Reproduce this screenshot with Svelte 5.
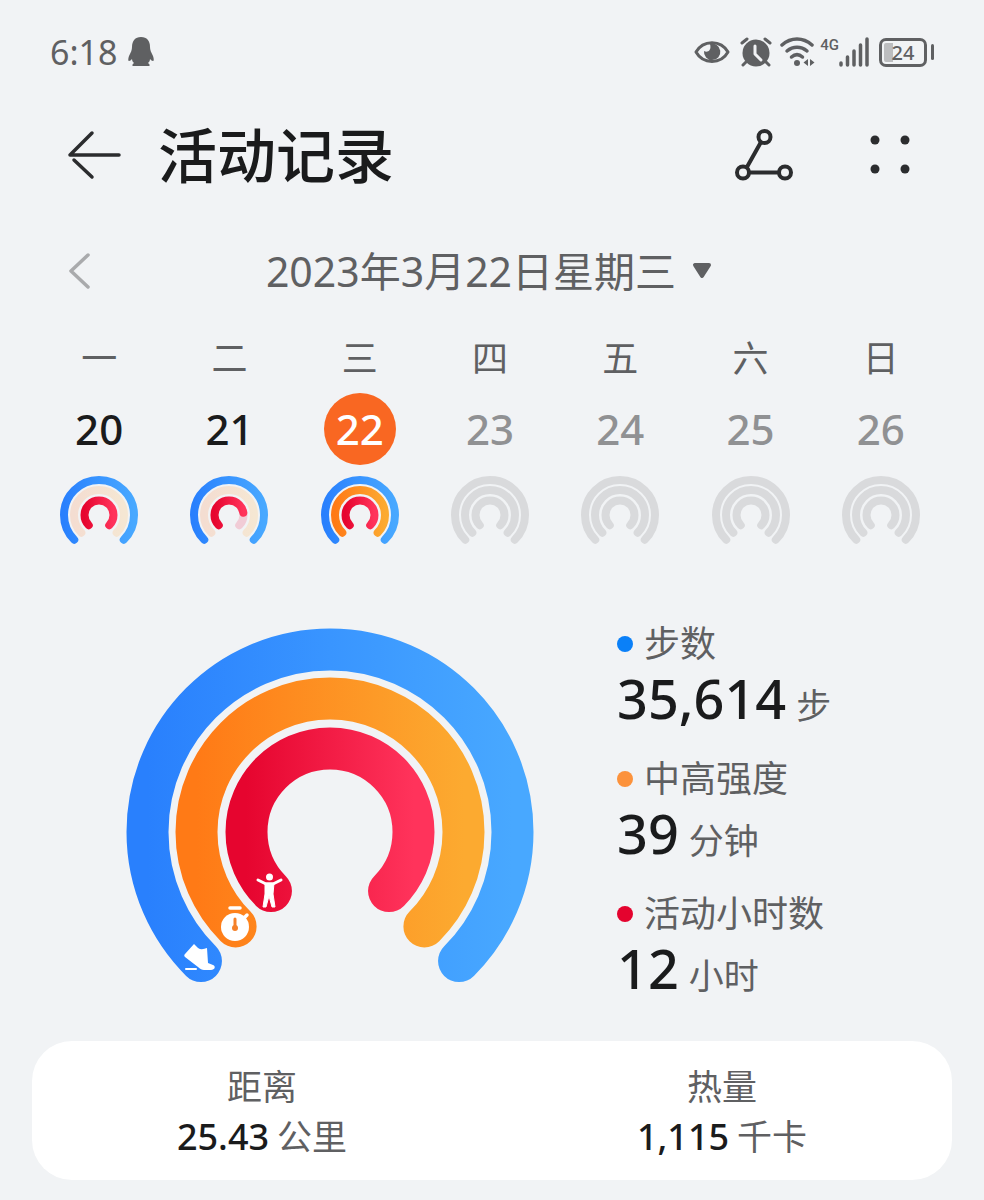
<script>
    const days = [
        { week: '一', date: 20, rings: [100, 0, 100] },
        { week: '二', date: 21, rings: [100, 0, 80] },
        { week: '三', date: 22, rings: [100, 100, 100] },
        { week: '四', date: 23, future: true },
        { week: '五', date: 24, future: true },
        { week: '六', date: 25, future: true },
        { week: '日', date: 26, future: true }
    ];

    const stats = [
        { type: 'steps', label: '步数', value: '35,614', unit: '步' },
        { type: 'effort', label: '中高强度', value: '39', unit: '分钟' },
        { type: 'hours', label: '活动小时数', value: '12', unit: '小时' }
    ];

    const totals = [
        { label: '距离', value: '25.43', unit: '公里' },
        { label: '热量', value: '1,115', unit: '千卡' }
    ];

    const types = ['steps', 'effort', 'hours'];
    const miniRadius = [35, 25, 14.5];
    const bigRadius = [182.5, 133.5, 83.5];

    let selected = $state(22);

    // 270 degree arc, open at the bottom
    function arc(cx, cy, r) {
        const k = r * Math.SQRT1_2;
        return `M${cx - k} ${cy + k}A${r} ${r} 0 1 1 ${cx + k} ${cy + k}`;
    }
</script>

<div class="status">
    <span class="time">6:18</span>
    <svg class="qq" width="26" height="30" viewBox="0 0 26 30">
        <path d="M13 0C7 0 4 4 4 10c0 3-1 5-3 9-1 3-1 5 0 5s2-1 3-2c0 2 1 3 2 4-2 1-2 3-1 3h16c1 0 1-2-1-3 1-1 2-2 2-4 1 1 2 2 3 2s1-2 0-5c-2-4-3-6-3-9 0-6-3-10-9-10z" fill="#5f6062" />
    </svg>

    <div class="status-right">
        <svg width="36" height="26" viewBox="0 0 36 26">
            <path d="M2 13C9 .5 27 .5 34 13 27 25.500 9 25.500 2 13z" fill="none" stroke="#5f6062" stroke-width="3" stroke-linejoin="round" />
            <path d="M16 5a8.200 8.200 0 1 1-6 7c3 2 8 0 6-7z" fill="#5f6062" />
        </svg>
        <svg class="alarm" width="32" height="30" viewBox="0 0 32 30">
            <circle cx="16" cy="16" r="13.500" fill="#5f6062" />
            <path d="M2 6l5-4M30 6l-5-4M6 25l-3 3M26 25l3 3" stroke="#5f6062" stroke-width="3" stroke-linecap="round" />
            <path d="M15 9v8l6 6" fill="none" stroke="#f1f2f4" stroke-width="3" stroke-linecap="round" stroke-linejoin="round" />
        </svg>
        <svg class="wifi" width="36" height="30" viewBox="0 0 36 30">
            <g fill="none" stroke="#5f6062" stroke-width="3.500" stroke-linecap="round">
                <path d="M2 8C11 0 23 0 32 8" />
                <path d="M7 14c6-5 14-5 20 0" />
                <path d="M11.500 20c3.500-3 7.500-3 11 0" />
            </g>
            <circle cx="17" cy="26" r="3" fill="#5f6062" />
            <path d="M28 22v7l-4.500-3.500zM30 22v7l4.500-3.500z" fill="#5f6062" />
        </svg>
        <span class="net">4G</span>
        <svg width="30" height="30" viewBox="0 0 30 30">
            <path d="M2 26v2M8.500 20v8M15 14v14M21.500 8v20M28 2v26" stroke="#5f6062" stroke-width="3.500" stroke-linecap="round" />
        </svg>
        <span class="battery">24</span>
        <span class="battery-tip"></span>
    </div>
</div>

<header class="header">
    <button class="icon-btn" aria-label="返回">
        <svg width="54" height="50" viewBox="0 0 54 50">
            <path d="M51 25H2L24 3M6 30l18 17" fill="none" stroke="#2b2c2e" stroke-width="3.500" stroke-linecap="round" stroke-linejoin="round" />
        </svg>
    </button>
    <h1>活动记录</h1>
    <button class="icon-btn share" aria-label="运动轨迹">
        <svg width="58" height="52" viewBox="0 0 58 52">
            <g fill="none" stroke="#2b2c2e" stroke-width="4">
                <path d="M26 13L12 38M14 43.500h30" />
                <circle cx="29.500" cy="8" r="6" />
                <circle cx="8" cy="43.500" r="6" />
                <circle cx="50" cy="43.500" r="6" />
            </g>
        </svg>
    </button>
    <button class="icon-btn" aria-label="更多">
        <svg width="40" height="40" viewBox="0 0 40 40" fill="#2b2c2e">
            <circle cx="5" cy="5" r="4.500" />
            <circle cx="35" cy="5" r="4.500" />
            <circle cx="5" cy="34" r="4.500" />
            <circle cx="35" cy="34" r="4.500" />
        </svg>
    </button>
</header>

<div class="date-bar">
    <button class="icon-btn" aria-label="上一周">
        <svg width="24" height="36" viewBox="0 0 24 36">
            <path d="M20 2L3 18l17 16" fill="none" stroke="#a9aaac" stroke-width="3.500" stroke-linecap="round" stroke-linejoin="round" />
        </svg>
    </button>
    <button class="date-btn">
        2023年3月22日星期三
        <svg width="20" height="16" viewBox="0 0 20 16">
            <path d="M3 2h14L10 13z" fill="#5f6062" stroke="#5f6062" stroke-width="4" stroke-linejoin="round" />
        </svg>
    </button>
</div>

<div class="week">
    {#each days as day}
        <button class="day" class:future={day.future} class:selected={selected === day.date} onclick={() => (selected = day.date)}>
            <span class="week-name">{day.week}</span>
            <span class="day-num">{day.date}</span>
            <svg width="78" height="70" viewBox="0 0 78 70">
                {#each types as type, i}
                    {#if !day.rings || day.rings[i] < 100}
                        <path class="mini track {type}" d={arc(39, 39, miniRadius[i])} />
                    {/if}
                    {#if day.rings && day.rings[i] > 0}
                        <path class="mini bar {type}" d={arc(39, 39, miniRadius[i])} pathLength="100" stroke-dasharray="{day.rings[i]} 200" />
                    {/if}
                {/each}
            </svg>
        </button>
    {/each}
</div>

<section class="summary">
    <div class="rings">
        <svg width="408" height="356" viewBox="0 0 408 356">
            <defs>
                <linearGradient id="grad-steps">
                    <stop offset="0" stop-color="#2980fd" />
                    <stop offset=".5" stop-color="#3995ff" />
                    <stop offset="1" stop-color="#48a8ff" />
                </linearGradient>
                <linearGradient id="grad-effort">
                    <stop offset="0" stop-color="#ff7a16" />
                    <stop offset="1" stop-color="#fcaa30" />
                </linearGradient>
                <linearGradient id="grad-hours">
                    <stop offset="0" stop-color="#e6052f" />
                    <stop offset="1" stop-color="#ff335b" />
                </linearGradient>
                <linearGradient id="track-effort">
                    <stop offset="0" stop-color="#f4ddd1" />
                    <stop offset="1" stop-color="#f5e7d3" />
                </linearGradient>
            </defs>
            {#each types as type, i}
                <path class="big bar {type}" d={arc(204, 204, bigRadius[i])} />
            {/each}
            <!-- shoe -->
            <path d="M59 326l9-10 4 4c3 2 6 1 9 0l1 15 5 2c3 1 2 5-2 5h-7c-2 0-4-1-6-3L59 329c-1-1-1-2 0-3z" fill="#fff" />
            <path d="M60 341h10" stroke="#fff" stroke-width="2" stroke-linecap="round" />
            <!-- stopwatch -->
            <circle cx="109" cy="299" r="14" fill="#fff" />
            <path d="M104 280h10M119 289l2-2" stroke="#fff" stroke-width="3.500" stroke-linecap="round" />
            <path d="M109 291v8" stroke="#f5812a" stroke-width="3" stroke-linecap="round" />
            <circle cx="109" cy="300" r="3" fill="#f5812a" />
            <!-- person -->
            <circle cx="143.500" cy="249" r="3.500" fill="#fff" />
            <path d="M132 252l8 4h7l8-4" fill="none" stroke="#fff" stroke-width="3" stroke-linecap="round" stroke-linejoin="round" />
            <path d="M139 255h9l-1 11 2 13h-3l-3-11-3 11h-3l2-13z" fill="#fff" stroke="#fff" stroke-linejoin="round" />
        </svg>
    </div>
    <div class="stats">
        {#each stats as stat}
            <div class="stat">
                <div class="stat-label"><i class="dot {stat.type}"></i>{stat.label}</div>
                <div class="stat-value"><b>{stat.value}</b><span>{stat.unit}</span></div>
            </div>
        {/each}
    </div>
</section>

<section class="card">
    {#each totals as total}
        <div class="total">
            <div class="total-label">{total.label}</div>
            <div class="total-value"><b>{total.value}</b><span>{total.unit}</span></div>
        </div>
    {/each}
</section>

<style>
:global(body) {
    background: #f1f3f5;
    color: #1a1b1c;
    font-family: "Noto Sans", "Noto Sans CJK SC", sans-serif;
}

button {
    border: 0;
    padding: 0;
    background: none;
    color: inherit;
    font: inherit;
    cursor: pointer;
}

svg {
    display: block;
    flex: none;
}

/* Status bar */
.status {
    display: flex;
    align-items: center;
    height: 48px;
    padding: 28px 50px 0;
    color: #5f6062;
}

.time {
    font-size: 34px;
    line-height: 48px;
}

.qq {
    margin-left: 11px;
}

.status-right {
    display: flex;
    align-items: center;
    margin-left: auto;
}

.alarm {
    margin-left: 10px;
}

.wifi {
    margin-left: 8px;
}

.net {
    align-self: flex-start;
    margin: 0 0 0 4px;
    font: 500 15px/16px Roboto, sans-serif;
}

.battery {
    box-sizing: border-box;
    width: 48px;
    height: 29px;
    margin-left: 10px;
    border: 3px solid #5f6062;
    border-radius: 7px;
    background: linear-gradient(90deg, #bcbdbf 24%, transparent 24%) content-box;
    padding: 2px;
    font-size: 20px;
    line-height: 19px;
    font-weight: 500;
    text-align: center;
}

.battery-tip {
    width: 3px;
    height: 16px;
    margin-left: 4px;
    border-radius: 2px;
    background: #5f6062;
}

/* Header */
.header {
    display: flex;
    align-items: center;
    height: 72px;
    margin-top: 43px;
    padding: 0 74px 0 68px;
}

h1 {
    margin: 0 0 0 36px;
    font-size: 59px;
    line-height: 72px;
    font-weight: 500;
}

.share {
    margin-left: auto;
    margin-right: 77px;
}

/* Date */
.date-bar {
    display: grid;
    grid-template-columns: 24px 1fr 24px;
    align-items: center;
    margin-top: 56px;
    padding: 0 74px 0 68px;
}

.date-btn {
    display: flex;
    align-items: center;
    justify-content: center;
    gap: 16px;
    color: #5f6062;
    font-size: 41px;
    line-height: 48px;
    white-space: nowrap;
}

.week {
    display: grid;
    grid-template-columns: repeat(7, 1fr);
    margin-top: 40px;
    padding: 0 38px 0 34px;
}

.day {
    display: flex;
    flex-direction: column;
    align-items: center;
}

.week-name {
    color: #5f6062;
    font-size: 36px;
    line-height: 48px;
}

.day-num {
    width: 72px;
    height: 72px;
    margin: 10px 0 11px;
    border-radius: 50%;
    font-size: 42px;
    line-height: 72px;
    font-weight: 500;
}

.future .day-num {
    color: #909193;
}

.selected .day-num {
    background: #f96722;
    color: #fff;
}

/* Rings */
.mini,
.big {
    fill: none;
    stroke-linecap: round;
}

.mini {
    stroke-width: 8px;
}

.big {
    stroke-width: 42px;
}

.track.steps {
    stroke: #d3e4f8;
}

.track.effort {
    stroke: url(#track-effort);
}

.track.hours {
    stroke: #f1ccd6;
}

.future .track {
    stroke: #d9dadc;
}

.bar.steps {
    stroke: url(#grad-steps);
}

.bar.effort {
    stroke: url(#grad-effort);
}

.bar.hours {
    stroke: url(#grad-hours);
}

/* Summary */
.summary {
    display: grid;
    grid-template-columns: 5fr 3fr;
    margin-top: 74px;
}

.rings {
    display: flex;
    align-items: flex-start;
    justify-content: center;
    padding: 8px 0 0 44px;
}

.stats {
    display: grid;
    gap: 23px;
}

.stat-label {
    display: flex;
    align-items: center;
    color: #5f6062;
    font-size: 36px;
    line-height: 48px;
}

.dot {
    width: 16px;
    height: 16px;
    margin: 0 11px 0 2px;
    border-radius: 50%;
}

.dot.steps {
    background: #0a80f8;
}

.dot.effort {
    background: #fc923c;
}

.dot.hours {
    background: #e4032e;
}

.stat-value {
    display: flex;
    align-items: baseline;
    gap: 10px;
    height: 64px;
    padding-left: 2px;
}

.stat-value b {
    font-size: 54px;
    line-height: 60px;
    font-weight: 500;
}

.stat-value span,
.total-value span {
    color: #5f6062;
    font-size: 35px;
    line-height: 40px;
}

/* Totals */
.card {
    display: grid;
    grid-template-columns: 1fr 1fr;
    margin: 39px 32px 20px;
    padding: 22px 0 17px;
    border-radius: 40px;
    background: #fff;
    text-align: center;
}

.total-label {
    color: #5f6062;
    font-size: 35px;
    line-height: 48px;
}

.total-value {
    display: flex;
    align-items: baseline;
    justify-content: center;
    gap: 8px;
    height: 52px;
}

.total-value b {
    font-size: 36px;
    line-height: 52px;
    font-weight: 500;
}
</style>
